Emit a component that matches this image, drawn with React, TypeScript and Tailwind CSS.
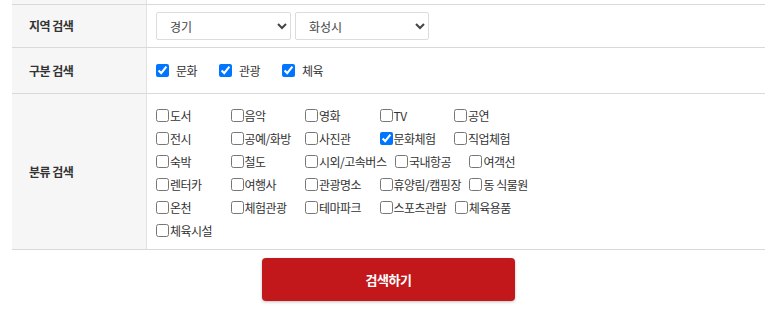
import React from "react"

const kinds = [
  ["도서", "음악", "영화", "TV", "공연"],
  ["전시", "공예/화방", "사진관", "문화체험", "직업체험"],
  ["숙박", "철도", "시외/고속버스", "국내항공", "여객선"],
  ["렌터카", "여행사", "관광명소", "휴양림/캠핑장", "동 식물원"],
  ["온천", "체험관광", "테마파크", "스포츠관람", "체육용품"],
  ["체육시설"],
]

const checkedKinds = ["문화체험"]

function Label({ children }: { children: React.ReactNode }) {
  return (
    <div className="w-[135px] shrink-0 bg-[#f6f6f6] border-r border-[#e2e2e2] flex items-center pl-[17px] text-[12px] font-bold text-[#333] tracking-[-0.5px]">
      {children}
    </div>
  )
}

export default function App() {
  return (
    <div className="w-[773px] h-[311px] bg-white font-['Malgun_Gothic','Noto_Sans_CJK_KR',sans-serif] text-[#333]">
      <div className="ml-[12px] w-[753px]">
        {/* previous row tail */}
        <div className="flex h-[5px] border-b border-[#d9d9d9]">
          <div className="w-[135px] bg-[#f6f6f6] border-r border-[#e2e2e2]"></div>
        </div>

        {/* 지역 검색 */}
        <div className="flex h-[43px] border-b border-[#d9d9d9]">
          <Label>지역 검색</Label>
          <div className="flex items-center gap-[4px] pl-[9px]">
            <select
              defaultValue="경기"
              className="w-[135px] h-[28px] border border-[#dcdcdc] rounded-[2px] bg-white pl-[9px] text-[12px] text-[#444]"
            >
              <option>경기</option>
            </select>
            <select
              defaultValue="화성시"
              className="w-[134px] h-[28px] border border-[#dcdcdc] rounded-[2px] bg-white pl-[9px] text-[12px] text-[#444]"
            >
              <option>화성시</option>
            </select>
          </div>
        </div>

        {/* 구분 검색 */}
        <div className="flex h-[46px] border-b border-[#d9d9d9]">
          <Label>구분 검색</Label>
          <div className="flex items-center pl-[9px]">
            {["문화", "관광", "체육"].map((t) => (
              <label key={t} className="flex items-center w-[63px] text-[12px] tracking-[-0.5px]">
                <input type="checkbox" defaultChecked className="m-0 w-[13px] h-[13px]" />
                <span className="ml-[7px]">{t}</span>
              </label>
            ))}
          </div>
        </div>

        {/* 분류 검색 */}
        <div className="flex h-[156px] border-b border-[#d9d9d9]">
          <Label>분류 검색</Label>
          <div className="pl-[9px] pt-[10px]">
            {kinds.map((row, i) => (
              <div key={i} className="flex h-[23px]">
                {row.map((k) => (
                  <label
                    key={k}
                    className="flex items-center min-w-[66px] mr-[8.5px] text-[12px] tracking-[-0.5px] whitespace-nowrap"
                  >
                    <input
                      type="checkbox"
                      defaultChecked={checkedKinds.includes(k)}
                      className="m-0 w-[13px] h-[13px]"
                    />
                    <span className="ml-[1px]">{k}</span>
                  </label>
                ))}
              </div>
            ))}
          </div>
        </div>

        <div className="flex justify-center mt-[8px]">
          <button className="w-[253px] h-[43px] bg-[#c2181c] rounded-[4px] text-white text-[13px] font-bold tracking-[-0.5px] shadow-[0_1px_3px_rgba(0,0,0,0.25)]">
            검색하기
          </button>
        </div>
      </div>
    </div>
  )
}
